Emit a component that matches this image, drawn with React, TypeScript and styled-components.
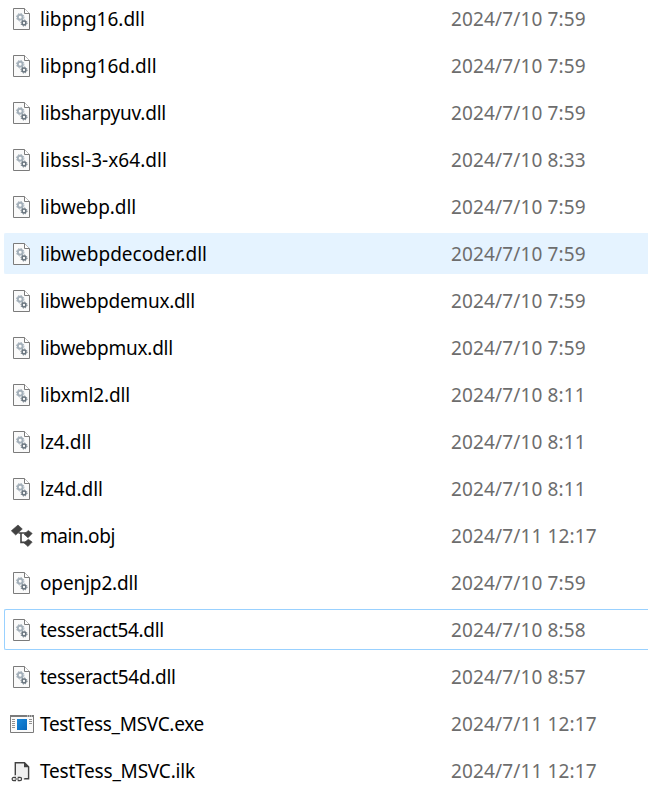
import React from 'react';
import styled, { createGlobalStyle } from 'styled-components';

const GlobalStyle = createGlobalStyle`
  * { box-sizing: border-box; }
  html, body { margin: 0; background: #fff; overflow: hidden; }
`;

const FileList = styled.main`
  height: 786px;
  overflow: hidden;
  padding-left: 4px;
  font-family: 'Noto Sans', 'Open Sans', sans-serif;
  font-size: 19px;
`;

const Rows = styled.div`
  display: flex;
  flex-direction: column;
  gap: 6px;
  margin-top: -2px;
`;

type RowState = 'normal' | 'hover' | 'focus';

const Row = styled.div<{ $state: RowState }>`
  display: grid;
  grid-template-columns: 35px 411px 1fr;
  align-items: center;
  height: 41px;
  flex: none;
  border: 1px solid
    ${({ $state }) => ($state === 'focus' ? '#99d1ff' : $state === 'hover' ? '#e5f3ff' : 'transparent')};
  border-right: 0;
  border-radius: 2px 0 0 2px;
  background: ${({ $state }) => ($state === 'hover' ? '#e5f3ff' : 'transparent')};
`;

const IconCell = styled.span`
  display: flex;
  padding-left: 5px;
`;

const Glyph = styled.svg.attrs({ viewBox: '0 -1 24 25' })`
  display: block;
  width: 24px;
  height: 25px;
`;

const FileName = styled.span<{ $spacing: number }>`
  color: #000;
  line-height: 26px;
  white-space: nowrap;
  letter-spacing: ${({ $spacing }) => $spacing}px;
`;

const Modified = styled.span`
  color: #6d6d6d;
  line-height: 26px;
  white-space: nowrap;
  letter-spacing: 0.13px;
`;

interface GearProps {
  cx: number;
  cy: number;
  r: number;
  color: string;
  width: number;
}

const Gear = ({ cx, cy, r, color, width }: GearProps) => {
  const outer = r + width / 2 + 0.4;
  const tooth = (outer * Math.PI) / 8;
  return (
    <g fill="none" stroke={color}>
      <circle cx={cx} cy={cy} r={r} strokeWidth={width} />
      <circle cx={cx} cy={cy} r={outer} strokeWidth="1" strokeDasharray={`${tooth} ${tooth}`} />
    </g>
  );
};

const DllIcon = () => (
  <Glyph>
    <path d="M3.5 1.5h11l5 5v16h-16z" fill="#fafafa" stroke="#7b7b7b" />
    <path d="M14.5 1.5v5h5" fill="#fff" stroke="#7b7b7b" />
    <Gear cx={10.2} cy={10.2} r={2.4} color="#a3afb9" width={1.9} />
    <Gear cx={14} cy={16} r={1.9} color="#68747e" width={1.5} />
  </Glyph>
);

const ObjIcon = () => (
  <Glyph>
    <g fill="#424242" stroke="#424242" strokeWidth="0.6" strokeLinejoin="round">
      <path d="M1.3 6.8 8 1l4.3 4-6.6 6z" />
      <path d="m14 10.2 4.3-3.7 3.9 2.9-4.2 4.4z" />
      <path d="m14 18.9 4.3-3.7 3.9 2.9-4.2 4.4z" />
    </g>
    <path d="M8.5 9H16M11 9v9.4h5" fill="none" stroke="#424242" strokeWidth="1.6" />
  </Glyph>
);

const ExeIcon = () => (
  <Glyph>
    <defs>
      <linearGradient id="exePane" x1="0" y1="0" x2="1" y2="1">
        <stop stopColor="#1688dc" />
        <stop offset="1" stopColor="#0767bb" />
      </linearGradient>
    </defs>
    <path d="M.5 3.5h23v17H.5z" fill="#fafafa" stroke="#7b7b7b" />
    <path d="M0 3h24v2H0z" fill="#7b7b7b" />
    <path d="M17 4h1M19 4h1M21 4h1" stroke="#ededed" />
    <path
      d="M2 7.5h3M2 9.5h3M2 11.5h3M2 13.5h3M2 15.5h3M19 7.5h3M19 9.5h3M19 11.5h3"
      stroke="#929292"
    />
    <path d="M7 7h10v11H7z" fill="url(#exePane)" />
  </Glyph>
);

const IlkIcon = () => (
  <Glyph>
    <path d="M5.3 16.5V3.7h9.2l4.1 4.1v11.9h-4.8" fill="#f0f0f0" stroke="#424242" strokeWidth="1.4" />
    <path d="M5.5 16v3.5h9V16z" fill="#f0f0f0" />
    <path d="M14 3v5.2h5.2z" fill="#424242" />
    <rect x="1.8" y="18.2" width="10" height="3.6" rx="1.8" fill="#f0f0f0" />
    <path
      d="M6 18.4H3.7a1.6 1.6 0 0 0 0 3.2H6M7.7 18.4H10a1.6 1.6 0 0 1 0 3.2H7.7M4.7 20H9"
      fill="none"
      stroke="#424242"
      strokeWidth="1.2"
    />
  </Glyph>
);

const icons = { dll: DllIcon, obj: ObjIcon, exe: ExeIcon, ilk: IlkIcon };

interface FileEntry {
  name: string;
  modified: string;
  kind: keyof typeof icons;
  spacing?: number;
  state?: RowState;
}

const files: FileEntry[] = [
  { name: 'libpng16.dll', modified: '2024/7/10 7:59', kind: 'dll' },
  { name: 'libpng16d.dll', modified: '2024/7/10 7:59', kind: 'dll' },
  { name: 'libsharpyuv.dll', modified: '2024/7/10 7:59', kind: 'dll', spacing: -0.2 },
  { name: 'libssl-3-x64.dll', modified: '2024/7/10 8:33', kind: 'dll', spacing: 0.06 },
  { name: 'libwebp.dll', modified: '2024/7/10 7:59', kind: 'dll', spacing: -0.05 },
  { name: 'libwebpdecoder.dll', modified: '2024/7/10 7:59', kind: 'dll', state: 'hover' },
  { name: 'libwebpdemux.dll', modified: '2024/7/10 7:59', kind: 'dll', spacing: -0.24 },
  { name: 'libwebpmux.dll', modified: '2024/7/10 7:59', kind: 'dll', spacing: -0.24 },
  { name: 'libxml2.dll', modified: '2024/7/10 8:11', kind: 'dll', spacing: -0.1 },
  { name: 'lz4.dll', modified: '2024/7/10 8:11', kind: 'dll' },
  { name: 'lz4d.dll', modified: '2024/7/10 8:11', kind: 'dll' },
  { name: 'main.obj', modified: '2024/7/11 12:17', kind: 'obj', spacing: -0.42 },
  { name: 'openjp2.dll', modified: '2024/7/10 7:59', kind: 'dll', spacing: -0.14 },
  { name: 'tesseract54.dll', modified: '2024/7/10 8:58', kind: 'dll', spacing: -0.34, state: 'focus' },
  { name: 'tesseract54d.dll', modified: '2024/7/10 8:57', kind: 'dll', spacing: -0.31 },
  { name: 'TestTess_MSVC.exe', modified: '2024/7/11 12:17', kind: 'exe', spacing: -0.31 },
  { name: 'TestTess_MSVC.ilk', modified: '2024/7/11 12:17', kind: 'ilk', spacing: -0.21 },
];

export default function App() {
  return (
    <>
      <GlobalStyle />
      <FileList>
        <Rows>
          {files.map(({ name, modified, kind, spacing = 0, state = 'normal' }) => {
            const Icon = icons[kind];
            return (
              <Row key={name} $state={state}>
                <IconCell>
                  <Icon />
                </IconCell>
                <FileName $spacing={spacing}>{name}</FileName>
                <Modified>{modified}</Modified>
              </Row>
            );
          })}
        </Rows>
      </FileList>
    </>
  );
}
